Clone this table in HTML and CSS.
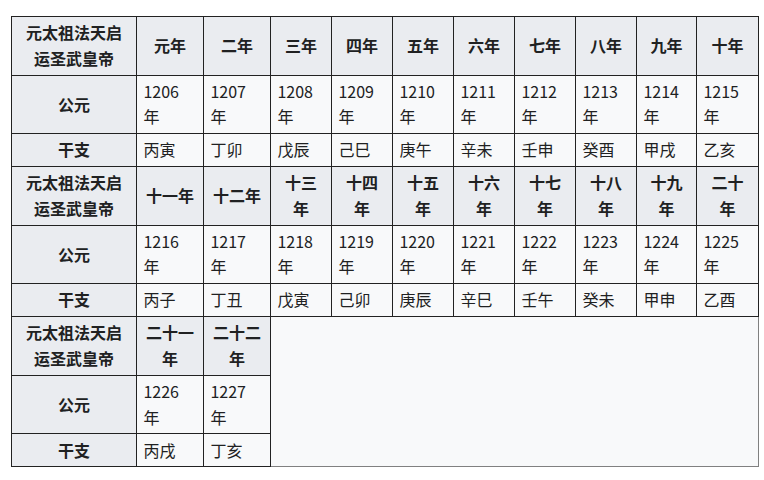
FILE: index.html
```html
<!DOCTYPE html>
<html lang="zh">
<head>
<meta charset="utf-8">
<title>元太祖法天启运圣武皇帝 纪年</title>
<link rel="stylesheet" href="styles.css">
</head>
<body>
<table class="era-table">
  <colgroup>
    <col class="c-head">
    <col class="c-wide"><col class="c-wide">
    <col class="c-std"><col class="c-std"><col class="c-std"><col class="c-std">
    <col class="c-std"><col class="c-std"><col class="c-narrow"><col class="c-last">
  </colgroup>
  <tbody>
    <tr>
      <th>元太祖法天启运圣武皇帝</th>
      <th>元年</th><th>二年</th><th>三年</th><th>四年</th><th>五年</th>
      <th>六年</th><th>七年</th><th>八年</th><th>九年</th><th>十年</th>
    </tr>
    <tr>
      <th>公元</th>
      <td>1206年</td><td>1207年</td><td>1208年</td><td>1209年</td><td>1210年</td>
      <td>1211年</td><td>1212年</td><td>1213年</td><td>1214年</td><td>1215年</td>
    </tr>
    <tr>
      <th>干支</th>
      <td>丙寅</td><td>丁卯</td><td>戊辰</td><td>己巳</td><td>庚午</td>
      <td>辛未</td><td>壬申</td><td>癸酉</td><td>甲戌</td><td>乙亥</td>
    </tr>
    <tr>
      <th>元太祖法天启运圣武皇帝</th>
      <th>十一年</th><th>十二年</th><th>十三年</th><th>十四年</th><th>十五年</th>
      <th>十六年</th><th>十七年</th><th>十八年</th><th>十九年</th><th>二十年</th>
    </tr>
    <tr>
      <th>公元</th>
      <td>1216年</td><td>1217年</td><td>1218年</td><td>1219年</td><td>1220年</td>
      <td>1221年</td><td>1222年</td><td>1223年</td><td>1224年</td><td>1225年</td>
    </tr>
    <tr>
      <th>干支</th>
      <td>丙子</td><td>丁丑</td><td>戊寅</td><td>己卯</td><td>庚辰</td>
      <td>辛巳</td><td>壬午</td><td>癸未</td><td>甲申</td><td>乙酉</td>
    </tr>
    <tr>
      <th>元太祖法天启运圣武皇帝</th>
      <th>二十一年</th><th>二十二年</th>
    </tr>
    <tr>
      <th>公元</th>
      <td>1226年</td><td>1227年</td>
    </tr>
    <tr>
      <th>干支</th>
      <td>丙戌</td><td>丁亥</td>
    </tr>
  </tbody>
</table>
</body>
</html>
```

FILE: styles.css
```css
html {
  background: #ffffff;
}

body {
  margin: 0;
  padding: 16px 0 0 11px;
  font-family: "Noto Sans CJK SC", "Noto Sans", sans-serif;
  font-size: 16px;
  line-height: 1.6;
  color: #202122;
}

.era-table {
  border-collapse: collapse;
  background: #f8f9fa;
  border: 1px solid #808080;
}

.c-head { width: 125px; }
.c-wide { width: 67px; }
.c-std { width: 61px; }
.c-narrow { width: 60px; }
.c-last { width: 62px; }

.era-table th,
.era-table td {
  border: 1px solid #222222;
  padding: 3.2px 6.4px;
}

.era-table th {
  background: #eaecf0;
  font-weight: bold;
  text-align: center;
  padding-left: 6.8px;
  padding-right: 6.8px;
}

.era-table td {
  text-align: left;
  padding-right: 10px;
}
```
